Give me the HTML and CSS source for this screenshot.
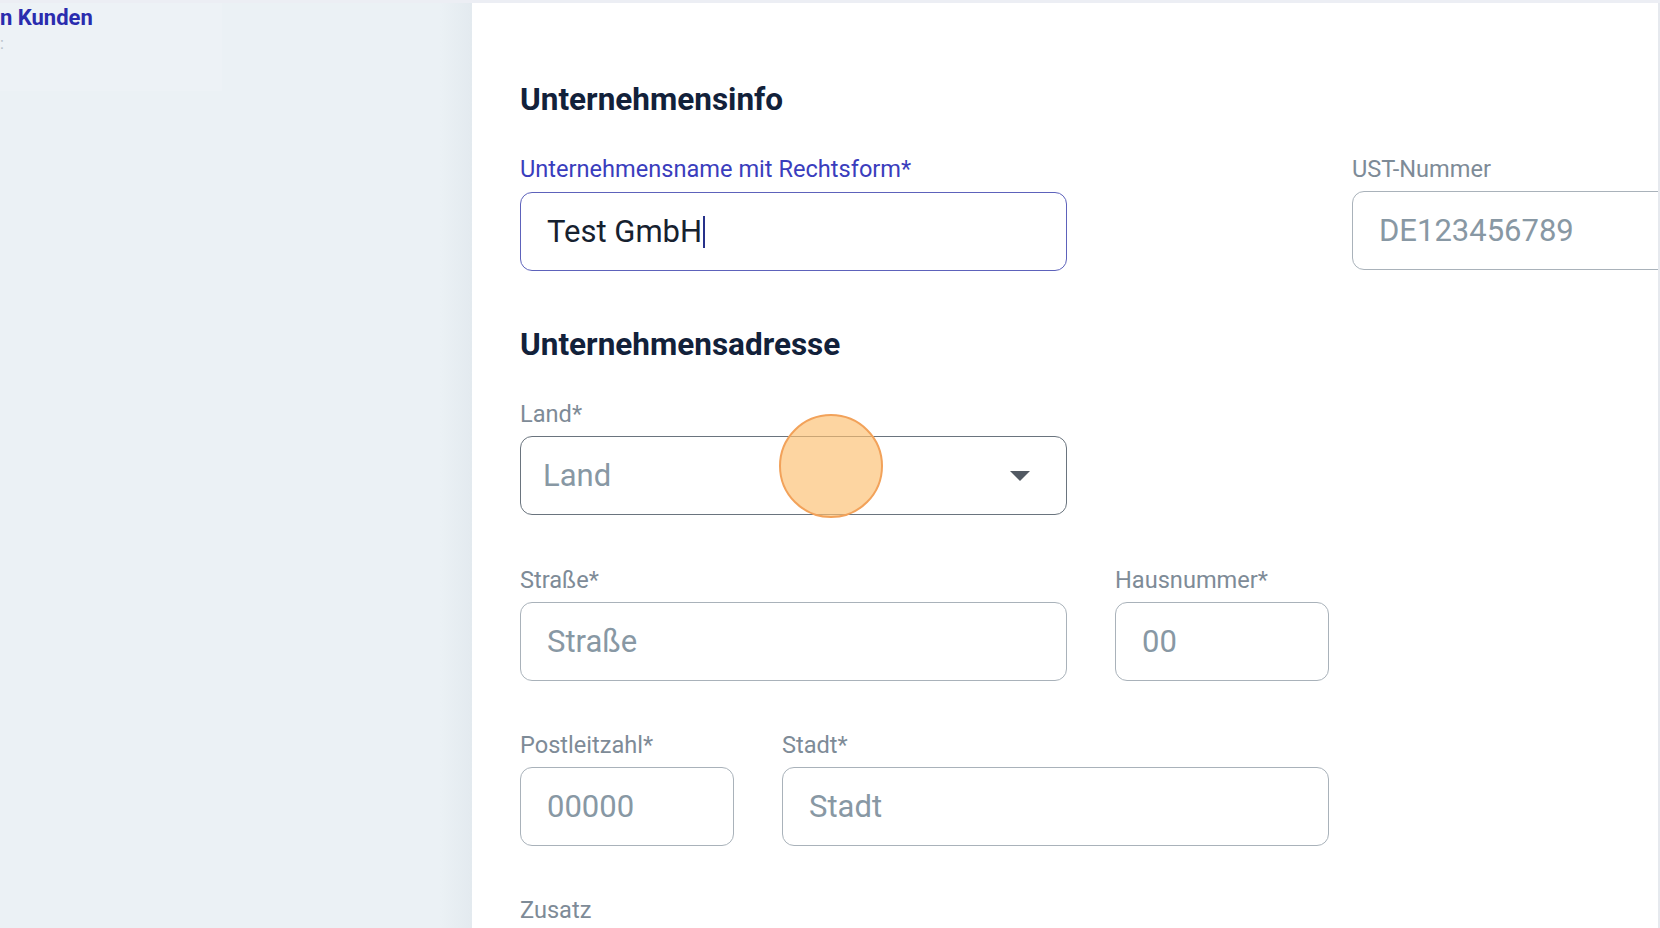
FILE: index.html
```html
<!DOCTYPE html>
<html lang="de">
<head>
<meta charset="utf-8">
<title>Unternehmensinfo</title>
<link rel="stylesheet" href="styles.css">
</head>
<body>
<div class="topband"></div>
<div class="layout">
  <aside class="sidebar">
    <div class="nav-hover">
      <div class="nav-item">n Kunden</div>
      <div class="nav-dot">:</div>
    </div>
  </aside>
  <main class="main">
    <div class="form">
      <h2 class="heading">Unternehmensinfo</h2>
      <div class="row row-info">
        <div class="field w-wide">
          <label class="label label-active">Unternehmensname mit Rechtsform*</label>
          <div class="input input-focus"><span class="value">Test GmbH</span><span class="caret"></span></div>
        </div>
        <div class="field w-wide">
          <label class="label">UST-Nummer</label>
          <div class="input"><span class="ph">DE123456789</span></div>
        </div>
      </div>

      <h2 class="heading">Unternehmensadresse</h2>
      <div class="row row-land">
        <div class="field w-wide">
          <label class="label">Land*</label>
          <div class="input select"><span class="ph ph-select">Land</span><span class="arrow"></span></div>
        </div>
      </div>
      <div class="row row-street">
        <div class="field w-wide">
          <label class="label">Straße*</label>
          <div class="input"><span class="ph">Straße</span></div>
        </div>
        <div class="field w-small">
          <label class="label">Hausnummer*</label>
          <div class="input"><span class="ph">00</span></div>
        </div>
      </div>
      <div class="row row-city">
        <div class="field w-small">
          <label class="label">Postleitzahl*</label>
          <div class="input"><span class="ph">00000</span></div>
        </div>
        <div class="field w-wide">
          <label class="label">Stadt*</label>
          <div class="input"><span class="ph">Stadt</span></div>
        </div>
      </div>
      <div class="row">
        <div class="field w-wide">
          <label class="label">Zusatz</label>
        </div>
      </div>
    </div>
  </main>
  <div class="edge"></div>
</div>
<div class="click-marker"></div>
</body>
</html>
```

FILE: styles.css
```css
* { box-sizing: border-box; }
html, body {
  margin: 0;
  padding: 0;
  width: 1660px;
  height: 928px;
  overflow: hidden;
  background: #ffffff;
  font-family: Roboto, "Liberation Sans", Arial, sans-serif;
}
body { position: relative; }

.topband {
  height: 3px;
  background: #eceef4;
}

.layout {
  display: flex;
  height: 925px;
}

.sidebar {
  width: 472px;
  flex: none;
  background: linear-gradient(to right, #ebf1f5 0, #ebf1f5 440px, #e3eaef 472px);
  overflow: hidden;
}
.nav-hover {
  width: 222px;
  height: 88px;
  background: #edf2f6;
  padding-top: 1px;
}
.nav-item {
  font-size: 22px;
  line-height: 28px;
  font-weight: 700;
  color: #2a2cae;
  white-space: nowrap;
}
.nav-dot {
  font-size: 16px;
  line-height: 20px;
  color: #b6c0c8;
  margin-top: 2px;
}

.main {
  flex: 1;
  min-width: 0;
  overflow: hidden;
  background: #ffffff;
}
.edge {
  width: 2px;
  flex: none;
  background: #e6e9ee;
}

.form {
  padding: 79px 0 0 48px;
  display: flex;
  flex-direction: column;
}

.heading {
  margin: 0 0 37px;
  font-size: 31.5px;
  line-height: 36px;
  font-weight: 700;
  color: #12213a;
}

.row {
  display: flex;
  gap: 48px;
  margin-bottom: 50px;
}
.row-info { gap: 285px; margin-bottom: 56px; }
.row-land { margin-bottom: 51px; }
.row-street { margin-bottom: 50px; }

.field { flex: none; display: flex; flex-direction: column; }
.w-wide { width: 547px; }
.w-small { width: 214px; }

.label {
  font-size: 23.6px;
  line-height: 28px;
  color: #7e8b97;
  margin-bottom: 8px;
  white-space: nowrap;
}
.label-active { color: #3a3dbd; margin-bottom: 9px; }

.input {
  height: 79px;
  border: 1.5px solid #a9b2ba;
  border-radius: 12px;
  padding: 0 26px;
  display: flex;
  align-items: center;
  font-size: 31px;
  white-space: nowrap;
  background: #fff;
}
.input-focus { border-color: #5d62bb; }
.value { color: #16212f; }
.caret {
  width: 2px;
  height: 32px;
  background: #27318a;
  margin-left: 1px;
}
.ph { color: #8898a4; }

.select {
  border-color: #6a747e;
  padding: 0 36px 0 22px;
  justify-content: space-between;
}
.arrow {
  width: 0;
  height: 0;
  border-left: 10px solid transparent;
  border-right: 10px solid transparent;
  border-top: 10px solid #525a63;
}

.click-marker {
  position: absolute;
  left: 779px;
  top: 414px;
  width: 104px;
  height: 104px;
  border-radius: 50%;
  background: rgba(252, 192, 112, 0.66);
  border: 2px solid #f2a25a;
}
```
